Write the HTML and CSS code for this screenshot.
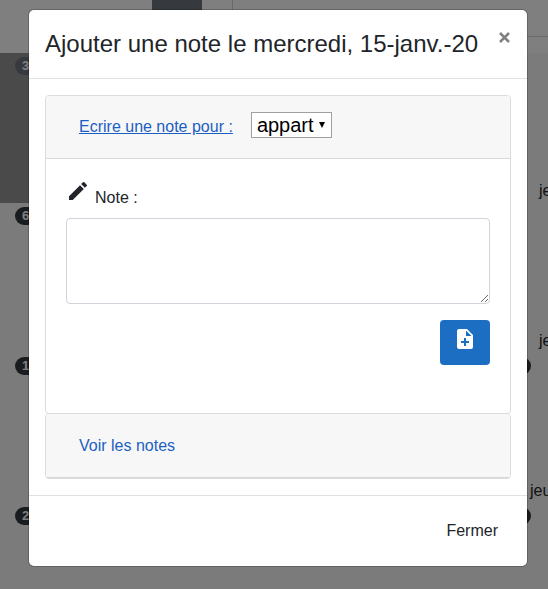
FILE: index.html
```html
<!DOCTYPE html>
<html lang="fr">
<head>
<meta charset="utf-8">
<title>Ajouter une note</title>
<link rel="stylesheet" href="styles.css">
</head>
<body>
<div class="page">
  <div class="toolbar"><div class="tool-button"></div><div class="tool-field"></div></div>
  <div class="week past"><div class="badges"><span class="badge muted">3</span></div><div class="day">jeu</div></div>
  <div class="week"><div class="badges"><span class="badge">6</span></div><div class="day">jeu</div></div>
  <div class="week"><div class="badges"><span class="badge">1</span><span class="badge"></span></div><div class="day wide">jeu</div></div>
  <div class="week"><div class="badges"><span class="badge">2</span><span class="badge"></span></div></div>
</div>
<div class="backdrop">
  <section class="modal">
    <header class="modal-header">
      <h4>Ajouter une note le mercredi, 15-janv.-20</h4>
      <button class="close" aria-label="Fermer"><svg width="11" height="11" viewBox="0 0 11 11"><path d="M1 1L10 10M10 1L1 10"/></svg></button>
    </header>
    <div class="modal-body">
      <div class="card">
        <div class="card-header">
          <a class="write" href="#">Ecrire une note pour :</a>
          <button class="select">appart<span class="arrow"></span></button>
        </div>
        <div class="card-body">
          <label class="note-label" for="note">
            <svg width="24" height="24" viewBox="0 0 24 24"><path d="M3 17.25V21h3.75L17.81 9.94l-3.75-3.75L3 17.25zM20.71 7.04a1 1 0 0 0 0-1.41l-2.34-2.34a1 1 0 0 0-1.41 0l-1.83 1.83 3.75 3.75 1.83-1.83z"/></svg>
            <span>Note :</span>
          </label>
          <textarea id="note"></textarea>
          <button class="add"><svg width="24" height="24" viewBox="0 0 24 24"><path d="M14 2H6a2 2 0 0 0-2 2v16a2 2 0 0 0 2 2h12a2 2 0 0 0 2-2V8l-6-6zm2 14h-3v3h-2v-3H8v-2h3v-3h2v3h3v2zm-3-7V3.5L18.500 9H13z"/></svg></button>
        </div>
      </div>
      <div class="card second">
        <div class="card-header"><a href="#">Voir les notes</a></div>
      </div>
    </div>
    <footer class="modal-footer"><button class="dismiss">Fermer</button></footer>
  </section>
</div>
</body>
</html>
```
FILE: styles.css
```css
* { box-sizing: border-box; }
body {
  margin: 0;
  height: 589px;
  overflow: hidden;
  font: 16px/24px "Liberation Sans", Arial, sans-serif;
  color: #212529;
}
button { font: inherit; color: inherit; }
a { color: #1c5fc4; text-decoration: none; }

.page { height: 589px; overflow: hidden; background: #f7f7f7; }
.toolbar { display: flex; gap: 30px; height: 53px; padding-left: 152px; background: #fff; }
.tool-button { width: 50px; height: 30px; background: #6c757d; }
.tool-field { flex: 1; height: 37px; border: solid #ced4da; border-width: 0 0 1px 1px; }
.week { display: flex; flex-direction: column; justify-content: space-between; height: 150px; padding-top: 4px; }
.past { background: linear-gradient(90deg, #949494 50%, #f7f7f7 50%); }
.badges { display: flex; justify-content: space-between; padding: 0 17px 0 15px; }
.badge {
  width: 24px;
  height: 18px;
  padding-left: 7px;
  border-radius: 9px;
  background: #343a40;
  color: #fff;
  font-size: 13px;
  font-weight: 700;
  line-height: 18px;
}
.muted { background: #6c757d; }
.day { padding-left: 539px; white-space: nowrap; }
.wide { padding-left: 530px; }

.backdrop { position: absolute; inset: 0; padding: 10px 21px 0 29px; background: rgba(0, 0, 0, .5); }
.modal { width: 498px; height: 556px; border-radius: 5px; background: #fff; box-shadow: 0 0 0 1px rgba(0, 0, 0, .2); }
.modal-header { display: flex; justify-content: space-between; height: 69px; padding: 16px 17px 0 16px; border-bottom: 1px solid #dee2e6; }
h4 { margin: 0; font-size: 24px; font-weight: 400; line-height: 36px; white-space: nowrap; }
.close { width: 11px; height: 11px; margin-top: 6px; padding: 0; border: 0; background: none; }
.close svg { display: block; fill: none; stroke: #808080; stroke-width: 2.5; }
.modal-body { height: 416px; padding: 16px; }
.card { height: 319px; border: 1px solid #dcdcdc; border-radius: 4px; }
.card-header { display: flex; align-items: center; height: 63px; padding: 0 33px; border-bottom: 1px solid #d7d7d7; background: #f7f7f7; border-radius: 3px 3px 0 0; }
.write { margin-right: 18px; padding-bottom: 1px; text-decoration: underline; }
.select { display: flex; align-items: center; gap: 5px; width: 81px; height: 26px; margin-top: -4px; padding: 0 0 0 5px; border: 1px solid #a0a0a0; background: #fff; color: #000; font-size: 20px; }
.arrow { border: solid transparent; border-width: 6px 3px 0; border-top-color: #000; }
.card-body { display: flex; flex-direction: column; padding: 20px 20px 0; }
.note-label { display: flex; align-items: flex-start; gap: 5px; height: 39px; }
.note-label svg { fill: #212529; }
.note-label span { padding-top: 7px; }
textarea { display: block; width: 424px; height: 86px; border: 1px solid #ced4da; border-radius: 4px; outline: 0; resize: vertical; }
.add { display: flex; align-items: flex-start; align-self: flex-end; width: 50px; height: 45px; margin-top: 16px; padding: 7px 0 0 13px; border: 0; border-radius: 4px; background: #1b6ec2; }
.add svg { display: block; fill: #fff; }
.second { height: 66px; margin-top: -1px; }
.second .card-header { height: 64px; }
.modal-footer { display: flex; justify-content: flex-end; height: 71px; padding: 23px 29px 0 0; border-top: 1px solid #dee2e6; }
.dismiss { height: 24px; padding: 0; border: 0; background: none; }
```
